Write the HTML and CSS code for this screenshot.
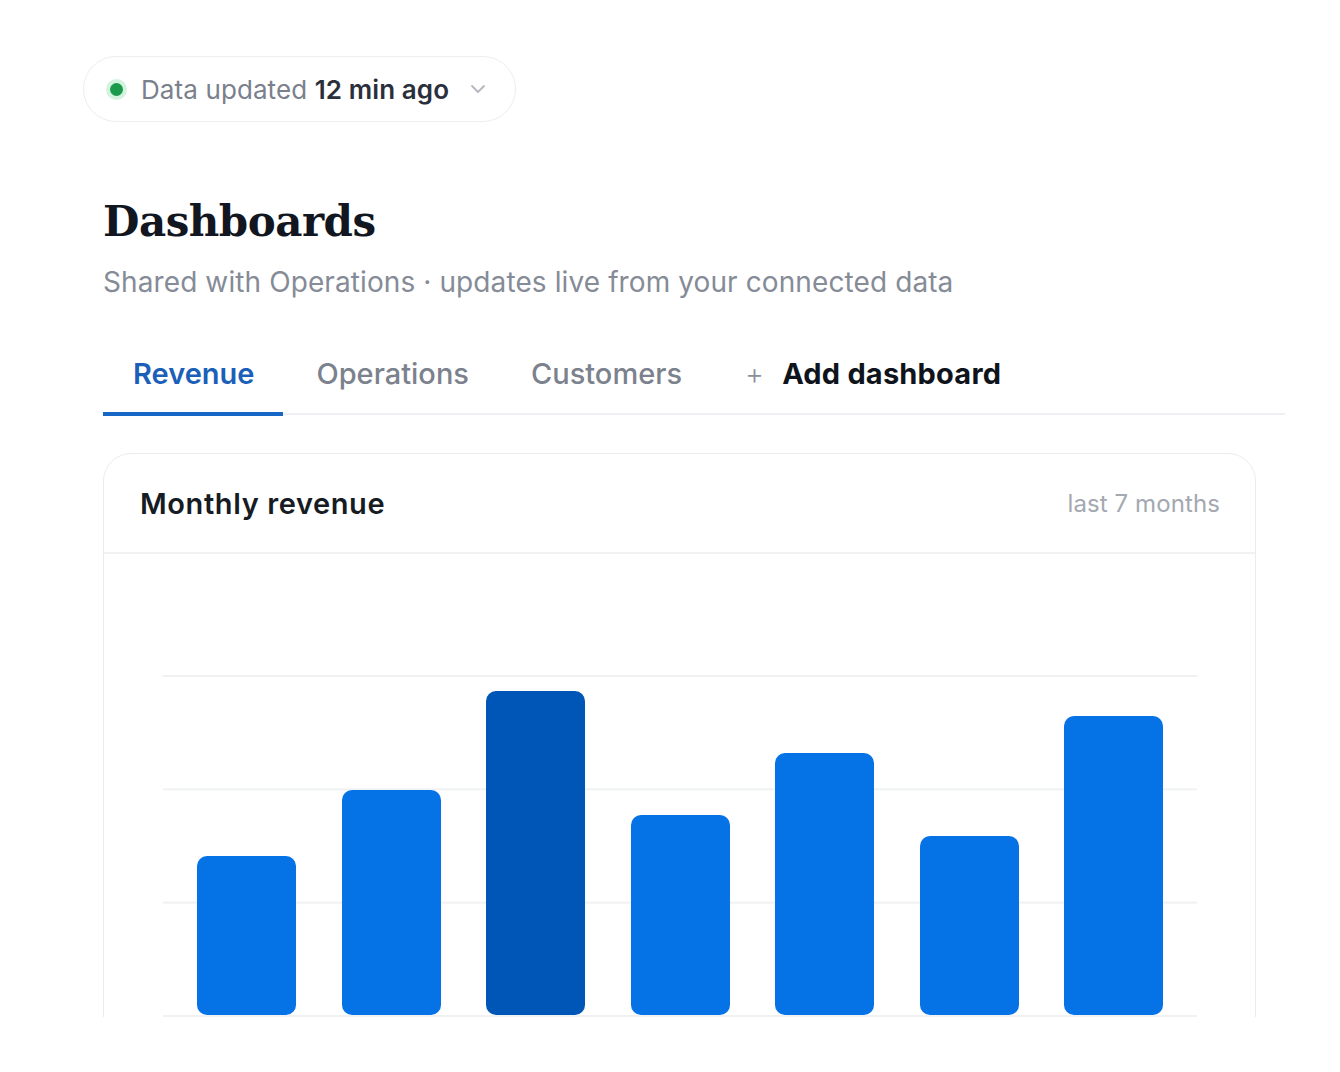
FILE: index.html
```html
<!DOCTYPE html>
<html lang="en">
<head>
<meta charset="utf-8">
<title>Dashboards</title>
<link rel="stylesheet" href="styles.css">
</head>
<body>
<div class="page">
  <div class="status-pill">
    <span class="status-dot"></span>
    <span class="status-text">Data updated <strong>12 min ago</strong></span>
    <svg class="chevron" width="16" height="10" viewBox="0 0 16 10" fill="none"><path d="M2 2l6 6 6-6" stroke="#b4b8c0" stroke-width="1.8" stroke-linecap="round" stroke-linejoin="round"/></svg>
  </div>

  <main class="main">
    <h1 class="title">Dashboards</h1>
    <p class="subtitle">Shared with Operations · updates live from your connected data</p>

    <nav class="tabs">
      <a class="tab tab-active">Revenue</a>
      <a class="tab">Operations</a>
      <a class="tab">Customers</a>
      <a class="tab tab-add"><span class="plus">+</span>Add dashboard</a>
    </nav>

    <section class="card">
      <header class="card-head">
        <h2 class="card-title">Monthly revenue</h2>
        <span class="card-meta">last 7 months</span>
      </header>
      <div class="card-body">
        <div class="plot">
          <div class="bar" style="height:159px"></div>
          <div class="bar" style="height:225px"></div>
          <div class="bar bar-peak" style="height:324px"></div>
          <div class="bar" style="height:200px"></div>
          <div class="bar" style="height:262px"></div>
          <div class="bar" style="height:179px"></div>
          <div class="bar" style="height:299px"></div>
        </div>
      </div>
    </section>
  </main>
</div>
</body>
</html>
```

FILE: styles.css
```css
* { box-sizing: border-box; }
html, body { margin: 0; padding: 0; background: #ffffff; }
body {
  font-family: Inter, "Noto Sans", "Liberation Sans", sans-serif;
  color: #151a23;
}
.page {
  height: 1017px;
  overflow: hidden;
  padding: 56px 55px 0 83px;
}
.status-pill {
  display: inline-flex;
  align-items: center;
  height: 66px;
  padding: 0 29px 0 26px;
  border: 1px solid #eceef1;
  border-radius: 33px;
  background: #fff;
}
.status-dot {
  width: 13px;
  height: 13px;
  border-radius: 50%;
  background: #1b9a4b;
  box-shadow: 0 0 0 4px #d4f3de;
  margin-right: 18px;
}
.status-text {
  font-size: 26px;
  color: #7a808c;
  letter-spacing: 0.1px;
}
.status-text strong {
  font-weight: 600;
  color: #2a303b;
}
.chevron { margin-left: 21px; }

.main { padding-left: 20px; }
.title {
  margin: 74px 0 0;
  font-family: "DejaVu Serif", "Liberation Serif", serif;
  font-weight: 700;
  font-size: 42px;
  line-height: 52px;
  color: #111620;
  letter-spacing: -0.5px;
}
.subtitle {
  margin: 17px 0 0;
  font-size: 28px;
  line-height: 34px;
  color: #858b97;
  letter-spacing: 0.1px;
}
.tabs {
  display: flex;
  margin-top: 45px;
  border-bottom: 2px solid #eef0f3;
}
.tab {
  display: block;
  padding: 12px 29px 20px;
  font-size: 29px;
  line-height: 36px;
  font-weight: 500;
  color: #7b818d;
  margin-right: 4px;
  border-bottom: 4px solid transparent;
  margin-bottom: -3px;
}
.tab-active {
  color: #1c5fb8;
  font-weight: 600;
  border-bottom-color: #1667c6;
  padding-left: 30px;
  padding-right: 29px;
}
.tab-add {
  color: #0f141c;
  font-weight: 700;
  padding-left: 30px;
  letter-spacing: 0.2px;
}
.plus {
  font-weight: 300;
  color: #8a909b;
  margin-right: 18px;
}

.card {
  margin-top: 38px;
  width: 1153px;
  border: 1px solid #eaecef;
  border-radius: 28px;
  background: #fff;
  padding-bottom: 60px;
}
.card-head {
  display: flex;
  align-items: center;
  justify-content: space-between;
  height: 100px;
  padding: 0 35px 0 36px;
  border-bottom: 2px solid #f1f2f4;
}
.card-title {
  margin: 0;
  font-size: 29px;
  font-weight: 600;
  color: #161b24;
  letter-spacing: 0.6px;
}
.card-meta {
  font-size: 24px;
  color: #a3a8b1;
  letter-spacing: 0.1px;
}
.card-body {
  padding: 121px 58px 0 59px;
}
.plot {
  display: flex;
  justify-content: space-between;
  align-items: flex-end;
  height: 342px;
  padding: 0 34px;
  background-image: linear-gradient(#eff1f3 2px, transparent 2px);
  background-size: 100% 113.33px;
  border-bottom: 2px solid #eff1f3;
}
.bar {
  width: 99px;
  border-radius: 10px;
  background: #0572e6;
}
.bar-peak { background: #0056b6; }
```
